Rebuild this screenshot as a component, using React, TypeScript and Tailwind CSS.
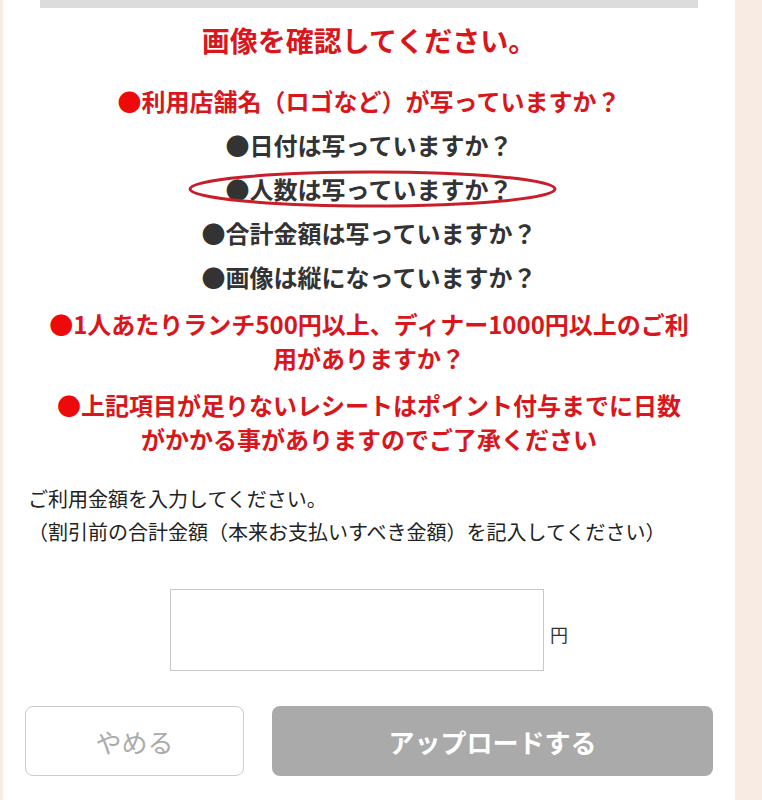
const jp = { fontFamily: '"Noto Sans CJK JP", "Noto Sans", sans-serif' };

const Bullet = ({ red }: { red?: boolean }) => (
  <span className={red ? "text-[#ee0a0a]" : "text-[#333333]"}>●</span>
);

const App = () => {
  return (
    <div className="flex min-h-[800px] w-[762px] bg-[#f7ebe4]" style={jp}>
      <div className="ml-[3px] flex w-[732px] flex-col bg-white px-[22px]">
        <div className="mx-[15px] h-[8px] bg-[#dcdcdc]" />

        <h1 className="mt-[12px] text-center text-[28px] font-bold leading-[40px] text-[#d9161b]">
          画像を確認してください。
        </h1>

        <div className="mt-[24px] flex flex-col text-center text-[24px] font-bold leading-[34px]">
          <p className="text-[#d9161b]">
            <Bullet red />利用店舗名（ロゴなど）が写っていますか？
          </p>
          <p className="mt-[10px] text-[#333333]">
            <Bullet />日付は写っていますか？
          </p>
          <p className="mt-[10px] text-[#333333]">
            <span className="relative inline-block">
              <Bullet />人数は写っていますか？
              <svg
                className="absolute -left-[38px] -top-[2px] h-[38px] w-[369px]"
                viewBox="0 0 369 38"
                fill="none"
              >
                <ellipse cx="184.5" cy="19" rx="182.5" ry="17" stroke="#c81e2a" strokeWidth="3" />
              </svg>
            </span>
          </p>
          <p className="mt-[10px] text-[#333333]">
            <Bullet />合計金額は写っていますか？
          </p>
          <p className="mt-[10px] text-[#333333]">
            <Bullet />画像は縦になっていますか？
          </p>
          <p className="mt-[13px] text-[#d9161b]">
            <Bullet red />1人あたりランチ500円以上、ディナー1000円以上のご利
            <br />
            用がありますか？
          </p>
          <p className="mt-[13px] text-[#d9161b]">
            <Bullet red />上記項目が足りないレシートはポイント付与までに日数
            <br />
            がかかる事がありますのでご了承ください
          </p>
        </div>

        <div className="mt-[26px] pl-[3px] text-[20px] leading-[33px] text-[#222222]">
          <p>ご利用金額を入力してください。</p>
          <p>（割引前の合計金額（本来お支払いすべき金額）を記入してください）</p>
        </div>

        <div className="mt-[41px] flex items-center justify-center">
          <input
            type="text"
            className="h-[82px] w-[374px] border border-[#c8c8c8] bg-white outline-none"
          />
          <span className="ml-[6px] mt-[8px] text-[18px] text-[#333333]">円</span>
        </div>

        <div className="mt-[35px] flex gap-[28px]">
          <button className="h-[70px] w-[219px] rounded-[8px] border border-[#cccccc] bg-white text-[26px] text-[#aaaaaa]">
            やめる
          </button>
          <button className="h-[70px] flex-1 rounded-[8px] bg-[#aaaaaa] text-[26px] font-bold text-white">
            アップロードする
          </button>
        </div>
      </div>
    </div>
  );
};

export default App;
